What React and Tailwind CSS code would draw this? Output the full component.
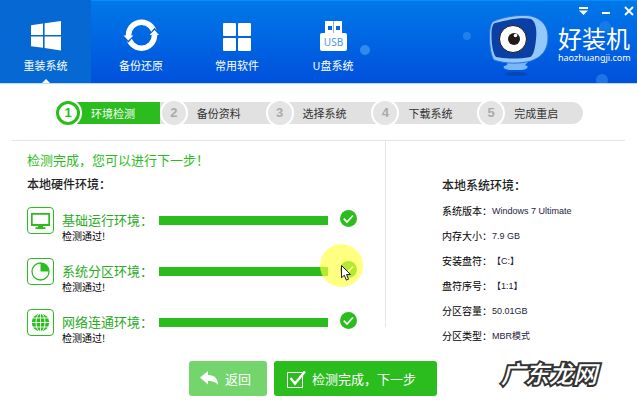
import { useState } from "react"

const tabs = [
  { name: "重装系统", icon: WindowsIcon },
  { name: "备份还原", icon: SyncIcon },
  { name: "常用软件", icon: AppsIcon },
  { name: "U盘系统", icon: UsbIcon },
]

const steps = ["环境检测", "备份资料", "选择系统", "下载系统", "完成重启"]

const checks = [
  { name: "基础运行环境", icon: MonitorIcon },
  { name: "系统分区环境", icon: PieIcon, pointer: true },
  { name: "网络连通环境", icon: GlobeIcon },
]

const systemInfo = [
  { label: "系统版本", value: "Windows 7 Ultimate" },
  { label: "内存大小", value: "7.9 GB" },
  { label: "安装盘符", value: "【C:】" },
  { label: "盘符序号", value: "【1:1】" },
  { label: "分区容量", value: "50.01GB" },
  { label: "分区类型", value: "MBR模式" },
]

function WindowsIcon() {
  return (
    <svg className="h-9 w-9" viewBox="0 0 36 36" fill="#fff">
      <path d="M3 7.2L15 5.6V17H3zM16.6 5.3L33 3v14H16.6zM3 18.4h12v11.4L3 28.2zM16.6 18.4H33V32.4L16.6 30z" />
    </svg>
  )
}

function SyncIcon() {
  return (
    <svg className="h-9 w-9" viewBox="0 0 36 36" fill="none">
      <circle cx="18.500" cy="17.200" r="13" stroke="#fff" strokeWidth="5.500" />
      <path d="M0.500 17.500L5.300 23.300 10.500 17.500M26.500 17L31.500 11.200 36 17" stroke="#0663de" strokeWidth="1.800" />
      <path d="M0.500 17.500h10L5.300 22.500zM26.500 17H36L31.500 12z" fill="#fff" />
    </svg>
  )
}

function AppsIcon() {
  return (
    <svg className="h-9 w-9" viewBox="0 0 36 36" fill="#fff">
      <rect x="4" y="5" width="13" height="13" rx="1" />
      <rect x="19" y="5" width="13" height="13" rx="1" />
      <rect x="4" y="20" width="13" height="13" rx="1" />
      <rect x="19" y="20" width="13" height="13" rx="1" />
    </svg>
  )
}

function UsbIcon() {
  return (
    <svg className="h-9 w-9" viewBox="0 0 36 36">
      <path d="M10 3h17v12H10z" fill="#fff" />
      <path d="M13 8h4v4h-4zM21 8h4v4h-4z" fill="#0a62dc" />
      <path d="M18.5 3v12" stroke="#7fb4f0" />
      <rect x="5" y="15" width="27" height="18" rx="2" fill="#fff" />
      <text x="18.5" y="28" textAnchor="middle" fontSize="10" fontFamily="Noto Sans, sans-serif" fill="#4a97e6">USB</text>
    </svg>
  )
}

function MonitorIcon() {
  return (
    <svg className="h-[23px] w-[23px]" viewBox="0 0 23 23" fill="#2bbd1d">
      <path fillRule="evenodd" d="M2 4h19v13H2zM3.7 5.7v9.2h15.6V5.7z" />
      <path d="M9 17h5v1.300h2.500V20h-10v-1.700H9z" />
    </svg>
  )
}

function PieIcon() {
  return (
    <svg className="h-[23px] w-[23px]" viewBox="0 0 23 23">
      <circle cx="11.500" cy="11.500" r="8.500" fill="none" stroke="#2bbd1d" strokeWidth="1.300" />
      <path d="M11.500 11.500V3a8.500 8.500 0 0 1 8.500 8.500z" fill="#2bbd1d" />
    </svg>
  )
}

function GlobeIcon() {
  return (
    <svg className="h-[23px] w-[23px]" viewBox="0 0 23 23">
      <circle cx="11.500" cy="11.500" r="8.700" fill="#2bbd1d" />
      <path d="M11.500 2v19M2 11.500h19M4 7h15M4 16h15" stroke="#fff" strokeWidth="0.900" />
      <ellipse cx="11.500" cy="11.500" rx="4.500" ry="9" fill="none" stroke="#fff" strokeWidth="0.900" />
    </svg>
  )
}

function Mascot() {
  return (
    <svg className="h-[66px] w-[62px]" viewBox="0 0 62 66">
      <ellipse cx="28" cy="62" rx="11" ry="2" fill="#0647b0" />
      <path d="M20 48h22l-5 5c4 1 4 4-3 5h-12c-8-1-8-4-3-5z" fill="#78b8fa" />
      <path d="M6 9C16 5 32 2 43 4c12 3 17 11 17 21 0 13-6 20-17 24-11 3-26 3-37-1C3 44 1.500 34 1.500 24 1.500 16 3 10 6 9z" fill="#93c8fc" stroke="#2a72d8" />
      <path d="M7 11c11-3 26-6 36-4 5 3 6 11 5 20-1 11-3 17-6 18-11 2-24 2-34 0C5 42 3.500 32 3.500 23c0-7 1-11 3.500-12z" fill="#0a3fa6" />
      <circle cx="25" cy="27" r="13.500" fill="#fff" stroke="#231815" />
      <circle cx="26" cy="27" r="6" fill="#231815" />
      <circle cx="27.500" cy="23.500" r="1.800" fill="#fff" />
    </svg>
  )
}

function Pointer() {
  return (
    <svg className="absolute left-[21px] top-[21px] h-4 w-3" viewBox="0 0 12 16">
      <path d="M.5.5v12.300l2.800-2.600 2 4.900 2.200-.9-2-4.700h4z" fill="#fff" stroke="#222" />
    </svg>
  )
}

function Header({ active, onSelect }) {
  return (
    <header className="relative flex h-[84px] border-b border-[#b9dcf8] bg-linear-to-b from-[#0078e8] to-[#0050dc] text-white">
      <svg className="absolute inset-0 h-full w-full" fill="#4fa6f5">
        <path d="M0 .5h3000" stroke="#0091fb" />
        <circle cx="57.300%" cy="50" r="5" opacity=".6" />
        <circle cx="73.300%" cy="36" r="4" opacity=".4" />
        <circle cx="95%" cy="27" r="6" opacity=".25" />
        <circle cx="94.500%" cy="80" r="6" opacity=".4" />
      </svg>
      <nav className="relative flex">
        {
          tabs.map((tab, i) => (
            <button
              key={tab.name}
              onClick={() => onSelect(i)}
              className={i === active
                ? "relative mr-0.5 flex w-[91px] flex-col items-center bg-[#0668d2] pt-[18px]"
                : "relative flex w-24 flex-col items-center pt-[18px]"}
            >
              <tab.icon />
              <span className="mt-[3px] text-[11px] leading-4">{tab.name}</span>
              {i === active && (
                <svg className="absolute bottom-0 h-1 w-2" viewBox="0 0 8 4"><path d="M0 4l4-4 4 4z" fill="#fff" /></svg>
              )}
            </button>
          ))
        }
      </nav>
      <div className="relative ml-auto flex gap-2 pr-0.5">
        <div className="pt-3">
          <Mascot />
        </div>
        <div className="flex w-[77px] flex-col">
          <div className="flex h-[22px] items-center justify-end gap-[11px]">
            <button aria-label="菜单">
              <svg className="h-3 w-3" viewBox="0 0 12 12" fill="#fff"><path d="M2 2h9v2H2zM2 5.500h9L6.500 10z" /></svg>
            </button>
            <button aria-label="最小化">
              <svg className="h-3 w-3" viewBox="0 0 12 12" fill="#fff"><path d="M2 7h8v2H2z" /></svg>
            </button>
            <button aria-label="关闭">
              <svg className="h-3 w-3" viewBox="0 0 12 12" stroke="#fff" strokeWidth="1.800"><path d="M2 2l8 8M10 2l-8 8" /></svg>
            </button>
          </div>
          <p className="mt-0.5 text-[24px] leading-7">好装机</p>
          <p className="font-['Noto_Sans',sans-serif] text-[9px] leading-[12px]">haozhuangji.com</p>
        </div>
      </div>
    </header>
  )
}

function Steps({ current }) {
  return (
    <ol className="mx-[54px] flex pb-[13px] pt-[15px]">
      {
        steps.map((step, i) => (
          <li key={step} className="flex-1">
            <div className={
              i === current
                ? "my-[3px] flex h-[22px] items-center rounded-l-full bg-[#2bbd1d] text-white"
                : i === steps.length - 1
                  ? "my-[3px] flex h-[22px] items-center rounded-r-full bg-[#e1e1e1] text-[#333]"
                  : "my-[3px] flex h-[22px] items-center bg-[#e1e1e1] text-[#333]"
            }>
              <span className="-my-[3px] h-7 w-7 shrink-0 rounded-full bg-white p-0.5">
                <span className={
                  i === current
                    ? "flex h-6 w-6 items-center justify-center rounded-full border-[3px] border-[#2bbd1d] font-['Liberation_Sans',sans-serif] text-[13px] font-bold text-[#2bbd1d]"
                    : "flex h-6 w-6 items-center justify-center rounded-full bg-[#e4e4e4] font-['Liberation_Sans',sans-serif] text-[13px] font-bold text-[#aaa]"
                }>
                  {i + 1}
                </span>
              </span>
              <span className="ml-[9px] text-[11px] leading-4">{step}</span>
            </div>
          </li>
        ))
      }
    </ol>
  )
}

function CheckRow({ check }) {
  return (
    <li className="relative flex items-start">
      <span className="flex h-[27px] w-[27px] shrink-0 items-center justify-center rounded-[4px] border border-[#2bbd1d]">
        <check.icon />
      </span>
      <div className="ml-2 w-[97px] shrink-0 pt-[5px]">
        <h3 className="whitespace-nowrap text-[13px] leading-4 text-[#2bab1f]">{check.name}：</h3>
        <p className="text-[10px] leading-[15px] text-black">检测通过!</p>
      </div>
      <div className="mt-[9px] h-[9px] flex-1 bg-[#2bbd1d]" role="progressbar" aria-label={check.name} aria-valuenow={100} />
      <svg className="ml-3 mr-7 mt-[3px] h-[17px] w-[17px] shrink-0" viewBox="0 0 17 17">
        <circle cx="8.500" cy="8.500" r="8.500" fill="#2bbd1d" />
        <path d="M3.800 8.700l3.200 3.300 6-6.500" fill="none" stroke="#fff" strokeWidth="1.700" />
      </svg>
      {check.pointer && (
        <div className="absolute -top-3.5 right-[22px] h-[43px] w-[43px] rounded-full bg-[#ffff3c]/65">
          <Pointer />
        </div>
      )}
    </li>
  )
}

const App = () => {
  const [active, setActive] = useState(0)

  return (
    <div className="relative bg-white font-['Noto_Sans_CJK_SC',sans-serif]">
      <Header active={active} onSelect={setActive} />
      <Steps current={0} />
      <main className="mx-3 grid grid-cols-[373fr_1px_239fr] border-t border-[#e2e2e2]">
        <section className="min-w-0 pl-[15px] pt-[9px]">
          <p className="text-[13px] leading-5 text-[#2bbd1d]">检测完成，您可以进行下一步！</p>
          <h2 className="mt-1.5 text-[12px] font-medium leading-4 text-[#222]">本地硬件环境：</h2>
          <ul className="mt-[15px] flex flex-col gap-[15px]">
            {checks.map((check) => <CheckRow key={check.name} check={check} />)}
          </ul>
        </section>
        <div className="mb-[18px] bg-[#e6e6e6]" />
        <section className="min-w-0 pl-14 pt-9">
          <h2 className="text-[12px] font-medium leading-4 text-[#222]">本地系统环境：</h2>
          <dl className="mt-2.5 flex flex-col gap-[9px] text-[10px] leading-4">
            {
              systemInfo.map((item) => (
                <div key={item.label} className="flex">
                  <dt className="w-[50px] text-black">{item.label}：</dt>
                  <dd className="font-['Liberation_Sans','Noto_Sans_CJK_SC',sans-serif] text-[9px] text-[#1c2340]">{item.value}</dd>
                </div>
              ))
            }
          </dl>
        </section>
      </main>
      <footer className="flex justify-center gap-[7px] pb-[7px] pr-[11px] pt-4 text-[13px] text-white">
        <button className="flex h-[35px] w-[78px] items-center rounded-[3px] bg-[#75d56d] pl-[11px]">
          <svg className="h-[18px] w-[18px]" viewBox="0 0 18 18" fill="#fff">
            <path d="M0 7.500L8 1v4c7 0 10 4 10 10-2-3-5-4-10-4v3.500z" />
          </svg>
          <span className="ml-[7px]">返回</span>
        </button>
        <button className="flex h-[35px] w-[163px] items-center rounded-[3px] bg-[#2bbd1d] pl-[13px]">
          <svg className="h-[18px] w-[19px]" viewBox="0 0 19 18" fill="none" stroke="#fff">
            <path d="M.5 2.500h15v15H.5z" />
            <path d="M3.500 8l4.500 5.500L18 1.500" strokeWidth="2.400" />
          </svg>
          <span className="ml-1.5">检测完成，下一步</span>
        </button>
      </footer>
      <p className="absolute bottom-3.5 right-10 text-[24px] font-medium italic leading-8 text-white [-webkit-text-stroke:4px_#333] [paint-order:stroke_fill]">广东龙网</p>
    </div>
  )
}

export default App
